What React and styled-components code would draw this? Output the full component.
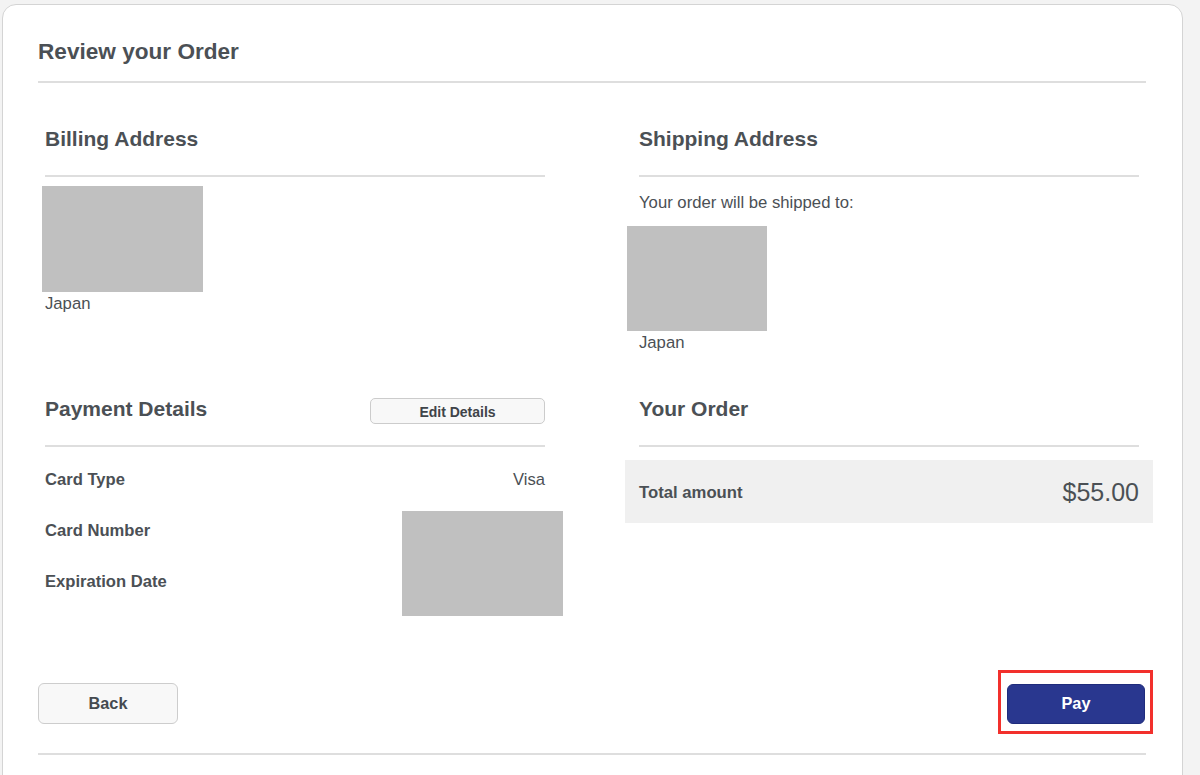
import React from "react";
import styled, { createGlobalStyle } from "styled-components";

const Global = createGlobalStyle`
  html, body { margin: 0; padding: 0; overflow: hidden; }
  body {
    background: #f3f3f3;
    font-family: "Liberation Sans", Arial, Helvetica, sans-serif;
    color: #4a4f54;
  }
  * { box-sizing: border-box; }
`;

const Card = styled.div`
  margin: 4px 0 0 2px;
  width: 1181px;
  background: #ffffff;
  border: 1px solid #d4d4d4;
  border-radius: 14px;
  padding: 0 36px 40px 35px;
`;

const Title = styled.h1`
  margin: 32px 0 14px;
  font-size: 22.6px;
  line-height: 30px;
  font-weight: 700;
  color: #4b5055;
`;

const Rule = styled.div`
  height: 2px;
  background: #dedede;
`;

const Sections = styled.div`
  margin-top: 41px;
  padding: 0 7px;
  display: grid;
  grid-template-columns: 500px 500px;
  column-gap: 94px;
  row-gap: 41px;
`;

const Section = styled.section`
  display: flex;
  flex-direction: column;
`;

const SectionHeader = styled.div`
  display: flex;
  justify-content: space-between;
  height: 30px;
  margin-bottom: 21px;
`;

const Heading = styled.h2`
  margin: 0;
  font-size: 21px;
  line-height: 30px;
  font-weight: 700;
  color: #4b5055;
`;

const SmallButton = styled.button`
  align-self: flex-end;
  width: 175px;
  height: 26px;
  background: #f8f8f8;
  border: 1.5px solid #cccccc;
  border-radius: 5px;
  font-family: inherit;
  font-size: 14px;
  font-weight: 700;
  color: #3f4449;
  padding: 1px 0 0;
`;

const Redacted = styled.div`
  background: #c0c0c0;
  width: ${(p) => p.$w}px;
  height: ${(p) => p.$h}px;
  margin-top: ${(p) => p.$top}px;
  margin-left: ${(p) => p.$left}px;
`;

const Text = styled.p`
  margin: ${(p) => p.$top || 0}px 0 0;
  font-size: 16.7px;
  line-height: 20px;
  color: #4b5055;
`;

const DetailRows = styled.div`
  position: relative;
  margin-top: 23px;
  display: flex;
  flex-direction: column;
  gap: 31px;
`;

const DetailRow = styled.div`
  display: flex;
  justify-content: space-between;
  font-size: 16.6px;
  line-height: 20px;
`;

const Label = styled.span`
  font-weight: 700;
  color: #4b5055;
`;

const Value = styled.span`
  color: #4b5055;
`;

const Cover = styled.div`
  position: absolute;
  top: 41px;
  right: -18px;
  width: 161px;
  height: 105px;
  background: #c0c0c0;
`;

const TotalBand = styled.div`
  margin: 13px -14px 0;
  height: 63px;
  padding: 2px 14px 0;
  background: #f0f0f0;
  display: flex;
  align-items: center;
  justify-content: space-between;
`;

const TotalLabel = styled.span`
  font-size: 16.7px;
  font-weight: 700;
  color: #4b5055;
`;

const Amount = styled.span`
  font-size: 25px;
  color: #4b5055;
`;

const Footer = styled.div`
  margin-top: 91px;
  margin-bottom: 29px;
  display: flex;
  align-items: center;
  justify-content: space-between;
`;

const Button = styled.button`
  width: ${(p) => (p.$primary ? 138 : 140)}px;
  height: ${(p) => (p.$primary ? 40 : 41)}px;
  margin-right: ${(p) => (p.$primary ? 1 : 0)}px;
  border-radius: 6px;
  border: ${(p) => (p.$primary ? "1px solid #1f2c7c" : "1.5px solid #cdcdcd")};
  background: ${(p) => (p.$primary ? "#29378f" : "#f8f8f8")};
  color: ${(p) => (p.$primary ? "#ffffff" : "#454a4f")};
  font-family: inherit;
  font-size: 16.3px;
  font-weight: 700;
  padding: 0;
`;

const Highlight = styled.span`
  position: relative;
  display: inline-flex;
  &::after {
    content: "";
    position: absolute;
    top: -14px;
    left: -9px;
    right: -7px;
    bottom: -10px;
    border: 3px solid #f2302c;
    pointer-events: none;
  }
`;

export default function App() {
  return (
    <>
      <Global />
      <Card>
        <Title>Review your Order</Title>
        <Rule />
        <Sections>
          <Section>
            <SectionHeader>
              <Heading>Billing Address</Heading>
            </SectionHeader>
            <Rule />
            <Redacted $w={161} $h={106} $top={9} $left={-3} />
            <Text $top={2}>Japan</Text>
          </Section>
          <Section>
            <SectionHeader>
              <Heading>Shipping Address</Heading>
            </SectionHeader>
            <Rule />
            <Text $top={16}>Your order will be shipped to:</Text>
            <Redacted $w={140} $h={105} $top={13} $left={-12} />
            <Text $top={2}>Japan</Text>
          </Section>
          <Section>
            <SectionHeader>
              <Heading>Payment Details</Heading>
              <SmallButton>Edit Details</SmallButton>
            </SectionHeader>
            <Rule />
            <DetailRows>
              <DetailRow>
                <Label>Card Type</Label>
                <Value>Visa</Value>
              </DetailRow>
              <DetailRow>
                <Label>Card Number</Label>
              </DetailRow>
              <DetailRow>
                <Label>Expiration Date</Label>
              </DetailRow>
              <Cover />
            </DetailRows>
          </Section>
          <Section>
            <SectionHeader>
              <Heading>Your Order</Heading>
            </SectionHeader>
            <Rule />
            <TotalBand>
              <TotalLabel>Total amount</TotalLabel>
              <Amount>$55.00</Amount>
            </TotalBand>
          </Section>
        </Sections>
        <Footer>
          <Button>Back</Button>
          <Highlight>
            <Button $primary>Pay</Button>
          </Highlight>
        </Footer>
        <Rule />
      </Card>
    </>
  );
}
